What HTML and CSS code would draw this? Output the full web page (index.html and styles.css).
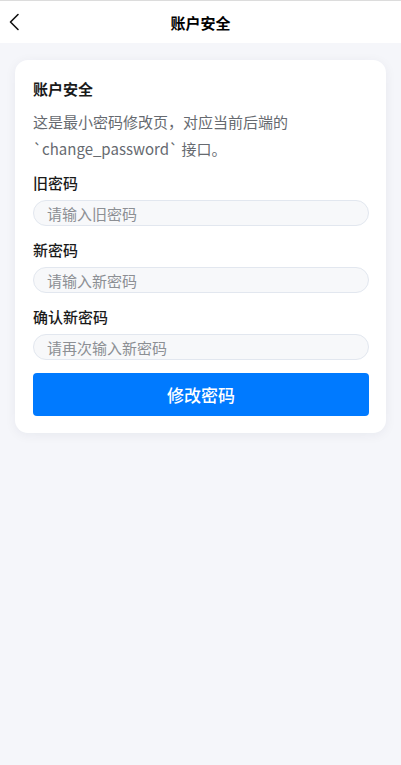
FILE: index.html
```html
<!DOCTYPE html>
<html lang="zh-CN">
<head>
<meta charset="utf-8">
<link rel="stylesheet" href="styles.css">
</head>
<body>
<div class="page">
  <header class="navbar">
    <span class="back">
      <svg width="12" height="18" viewBox="0 0 12 18"><path d="M10 1.5 L2.5 9 L10 16.5" fill="none" stroke="#111" stroke-width="1.6" stroke-linecap="round" stroke-linejoin="round"/></svg>
    </span>
    <span class="nav-title">账户安全</span>
  </header>
  <main class="content">
    <section class="card">
      <h2 class="card-title">账户安全</h2>
      <p class="desc">这是最小密码修改页，对应当前后端的 `change_password` 接口。</p>
      <div class="form">
        <div class="group">
          <label class="label">旧密码</label>
          <input class="input" type="password" placeholder="请输入旧密码">
        </div>
        <div class="group">
          <label class="label">新密码</label>
          <input class="input" type="password" placeholder="请输入新密码">
        </div>
        <div class="group">
          <label class="label">确认新密码</label>
          <input class="input" type="password" placeholder="请再次输入新密码">
        </div>
        <button class="submit">修改密码</button>
      </div>
    </section>
  </main>
</div>
</body>
</html>
```
FILE: styles.css
```css
* { box-sizing: border-box; }
html, body { margin: 0; padding: 0; }
body {
  font-family: "Noto Sans CJK SC", "Noto Sans", sans-serif;
  background: #f5f6fa;
  color: #1a1a1a;
  min-height: 765px;
}
.page { min-height: 765px; background: #f5f6fa; }
.navbar {
  position: relative;
  height: 43px;
  background: #fff;
  border-top: 1px solid #dcdcdc;
  display: flex;
  align-items: center;
  justify-content: center;
}
.back {
  position: absolute;
  left: 8px;
  top: 12px;
  display: flex;
}
.nav-title {
  font-size: 15px;
  font-weight: 700;
  color: #000;
}
.content { padding: 17px 15px; }
.card {
  background: #fff;
  border-radius: 13px;
  padding: 18px 17px 17px 18px;
  box-shadow: 0 2px 12px rgba(20, 30, 60, 0.06);
}
.card-title {
  margin: 0;
  font-size: 15px;
  line-height: 22px;
  font-weight: 700;
  color: #1a1a1a;
}
.desc {
  margin: 8px 0 0;
  font-size: 15px;
  line-height: 27px;
  color: #666a70;
}
.form {
  margin-top: 10px;
  display: flex;
  flex-direction: column;
  gap: 13px;
}
.group {
  display: flex;
  flex-direction: column;
  gap: 6px;
}
.label {
  font-size: 15px;
  line-height: 22px;
  font-weight: 500;
  color: #1a1a1a;
}
.input {
  height: 26px;
  border: 1px solid #e2e7ef;
  background: #f7f8fa;
  border-radius: 13px;
  padding: 0 13px;
  font-family: inherit;
  font-size: 15px;
  color: #333;
  outline: none;
}
.input::placeholder { color: #8c8f94; }
.submit {
  height: 43px;
  border: none;
  border-radius: 4px;
  background: #007aff;
  color: #fff;
  font-family: inherit;
  font-size: 17px;
  font-weight: 500;
}
```
